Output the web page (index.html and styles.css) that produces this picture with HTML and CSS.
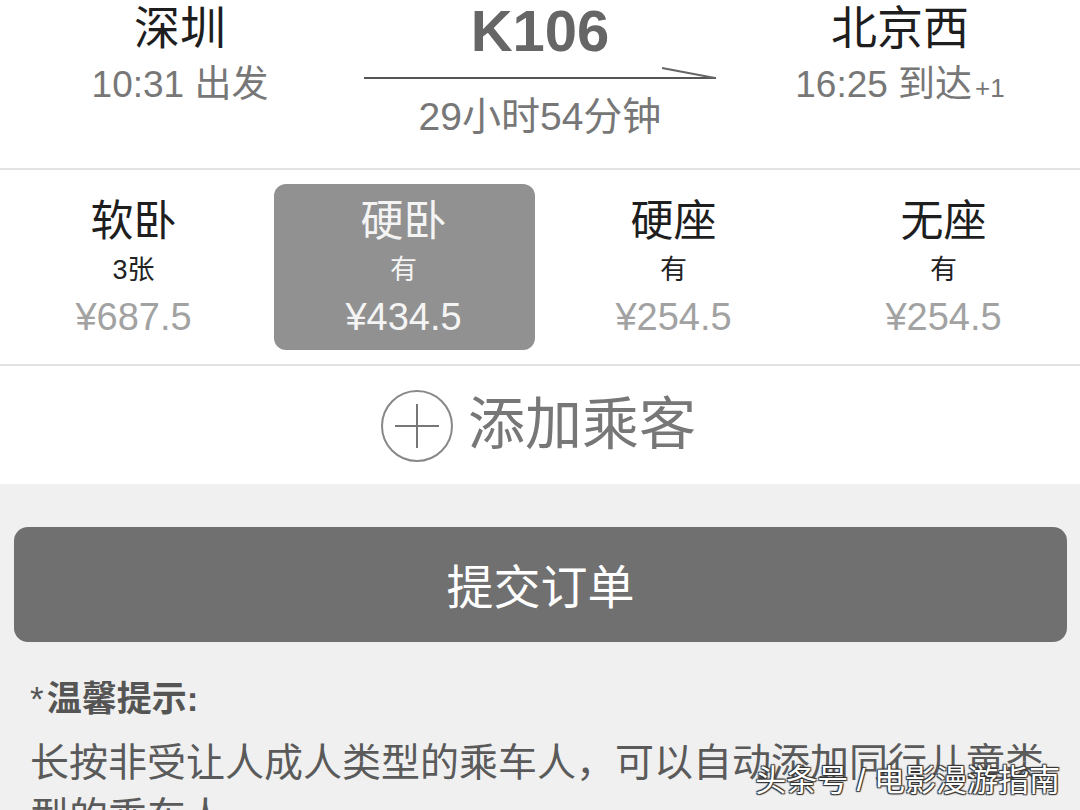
FILE: index.html
```html
<!DOCTYPE html>
<html lang="zh-CN">
<head>
  <meta charset="UTF-8" />
  <title>订单确认</title>
  <meta name="viewport" content="width=device-width, initial-scale=1.0" />
  <link rel="stylesheet" href="styles.css">
</head>
<body>
  <div class="page">
    <section class="trip">
      <div class="station">
        <div class="city">深圳</div>
        <div class="time">10:31 出发</div>
      </div>
      <div class="train">
        <div class="train-no">K106</div>
        <svg class="arrow" width="352" height="14" viewBox="0 0 352 14">
          <line x1="0" y1="11" x2="352" y2="11" stroke="#555" stroke-width="2" />
          <line x1="298" y1="1" x2="351" y2="11" stroke="#666" stroke-width="2" />
        </svg>
        <div class="duration">29小时54分钟</div>
      </div>
      <div class="station">
        <div class="city">北京西</div>
        <div class="time">16:25 到达<span class="plus">+1</span></div>
      </div>
    </section>

    <section class="seats">
      <div class="seat">
        <div class="seat-name">软卧</div>
        <div class="seat-left">3张</div>
        <div class="seat-price">¥687.5</div>
      </div>
      <div class="seat active">
        <div class="seat-name">硬卧</div>
        <div class="seat-left">有</div>
        <div class="seat-price">¥434.5</div>
      </div>
      <div class="seat">
        <div class="seat-name">硬座</div>
        <div class="seat-left">有</div>
        <div class="seat-price">¥254.5</div>
      </div>
      <div class="seat">
        <div class="seat-name">无座</div>
        <div class="seat-left">有</div>
        <div class="seat-price">¥254.5</div>
      </div>
    </section>

    <section class="add-passenger">
      <svg class="plus-icon" width="74" height="74" viewBox="0 0 74 74">
        <circle cx="37" cy="37" r="35" fill="none" stroke="#888" stroke-width="2" />
        <line x1="15" y1="37" x2="59" y2="37" stroke="#777" stroke-width="2" />
        <line x1="37" y1="15" x2="37" y2="59" stroke="#777" stroke-width="2" />
      </svg>
      <span>添加乘客</span>
    </section>

    <section class="bottom">
      <button class="submit">提交订单</button>
      <div class="tips">
        <div class="tips-title"><span class="star">*</span>温馨提示:</div>
        <p>长按非受让人成人类型的乘车人，可以自动添加同行儿童类型的乘车人。</p>
      </div>
      <div class="watermark">头条号 / 电影漫游指南</div>
    </section>
  </div>
</body>
</html>
```

FILE: styles.css
```css
* {
  box-sizing: border-box;
}

body {
  margin: 0;
  font-family: "Liberation Sans", "Noto Sans CJK SC", sans-serif;
  background: #f0f0f0;
  overflow: hidden;
}

.page {
  width: 1080px;
  height: 810px;
  overflow: hidden;
  position: relative;
}

/* top: stations and train */
.trip {
  display: grid;
  grid-template-columns: 1fr 1fr 1fr;
  height: 170px;
  background: white;
  border-bottom: 2px solid #e2e2e2;
}

.station {
  text-align: center;
  padding-top: 1px;
}

.city {
  font-size: 46px;
  line-height: 54px;
  color: #1e1e1e;
}

.time {
  margin-top: 9px;
  font-size: 37px;
  line-height: 42px;
  color: #777;
}

.plus {
  font-size: 26px;
  margin-left: 3px;
}

.train {
  display: flex;
  flex-direction: column;
  align-items: center;
}

.train-no {
  font-size: 58px;
  font-weight: bold;
  line-height: 66px;
  margin-top: -2px;
  color: #666;
}

.arrow {
  display: block;
  margin-top: 3px;
}

.duration {
  margin-top: 13px;
  font-size: 39px;
  line-height: 46px;
  color: #777;
}

/* seat types */
.seats {
  display: grid;
  grid-template-columns: repeat(4, 1fr);
  height: 196px;
  padding: 14px 0;
  background: white;
  border-bottom: 2px solid #e2e2e2;
}

.seat {
  display: flex;
  flex-direction: column;
  align-items: center;
  margin: 0 5px 0 4px;
  padding-top: 12px;
  padding-right: 2px;
  border-radius: 12px;
}

.seat-name {
  font-size: 43px;
  line-height: 50px;
  color: #1e1e1e;
}

.seat-left {
  margin-top: 4px;
  font-size: 27px;
  line-height: 40px;
  color: #222;
}

.seat-price {
  margin-top: 5px;
  font-size: 38px;
  line-height: 44px;
  color: #a2a2a2;
}

.seat.active {
  background: #919191;
}

.seat.active .seat-name,
.seat.active .seat-left,
.seat.active .seat-price {
  color: #f4f4f4;
}

/* add passenger */
.add-passenger {
  display: flex;
  align-items: center;
  justify-content: center;
  gap: 14px;
  height: 118px;
  background: white;
  padding-right: 4px;
  padding-top: 2px;
}

.add-passenger span {
  font-size: 57px;
  color: #777;
  line-height: 66px;
  padding-bottom: 4px;
}

/* bottom area */
.bottom {
  padding: 43px 13px 0 14px;
}

.submit {
  display: block;
  width: 100%;
  height: 115px;
  border: none;
  border-radius: 14px;
  background: #707070;
  color: white;
  font-family: "Liberation Sans", "Noto Sans CJK SC", sans-serif;
  font-size: 47px;
  padding-bottom: 4px;
}

.tips {
  padding: 36px 0 0 16px;
  color: #555;
}

.tips-title {
  font-size: 35px;
  line-height: 42px;
  font-weight: bold;
}

.star {
  margin-right: 3px;
  font-weight: normal;
}

.tips p {
  margin: 16px 0 0;
  font-size: 39px;
  line-height: 54px;
  color: #5a5a5a;
}

.watermark {
  position: absolute;
  right: 20px;
  bottom: 10px;
  font-size: 31px;
  color: white;
  text-shadow: 1px 1px 1px #333, -1px -1px 1px #333, 1px -1px 1px #333, -1px 1px 1px #333;
}
```
